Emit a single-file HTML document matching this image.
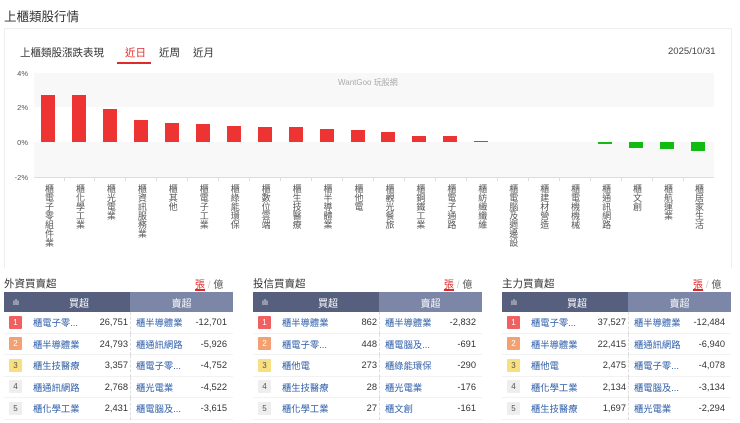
<!DOCTYPE html>
<html><head><meta charset="utf-8"><style>
*{margin:0;padding:0;box-sizing:border-box}
body{width:740px;height:423px;background:#fff;font-family:"Liberation Sans","Noto Sans CJK TC",sans-serif;color:#333;position:relative;overflow:hidden}
.abs{position:absolute}
.title{left:4px;top:6px;font-size:12.5px;color:#333}
.card{left:4px;top:28px;width:728px;height:240px;border:1px solid #eee;border-bottom:none}
.sub{left:20px;top:45px;font-size:10.5px;color:#333}
.tab{top:45px;font-size:10.5px;color:#333}
.date{left:668px;top:46px;font-size:9.5px;color:#444}
.ylab{font-size:7.5px;color:#555;width:26px;text-align:right;left:2px}
.bar{position:absolute;width:14px}
.xl{position:absolute;top:184px;width:10px;font-size:9px;line-height:9.3px;color:#555;writing-mode:vertical-rl;text-orientation:upright}
.ph{font-size:10.5px;top:276px}
.unit{top:276px;font-size:10px}
.tbl{position:absolute;top:292px;width:229px;font-size:9.3px}
.hd{height:20px;display:flex;color:#fff;font-size:10px}
.hd div{display:flex;align-items:center;justify-content:center}
.row{height:21.5px;display:flex;align-items:center;position:relative;border-bottom:1px solid #f2f2f2}
.bd{position:absolute;left:5px;width:13px;height:13px;font-size:8px;text-align:center;line-height:13px;color:#fff;border-radius:1px}
.n1{position:absolute;left:29px;color:#2e5ea8}
.v1{position:absolute;right:105px;color:#333}
.n2{position:absolute;left:132px;color:#2e5ea8}
.v2{position:absolute;right:6px;color:#333}
.dv{position:absolute;left:126px;top:0;bottom:-1px;border-left:1px dashed #ddd}
</style></head><body>
<div class="abs title">上櫃類股行情</div>
<div class="abs card"></div>
<div class="abs sub">上櫃類股漲跌表現</div>
<div class="abs tab" style="left:125px;color:#e02a2a">近日</div>
<div class="abs" style="left:117px;top:62px;width:34px;height:2px;background:#e02a2a"></div>
<div class="abs tab" style="left:159px">近周</div>
<div class="abs tab" style="left:193px">近月</div>
<div class="abs date">2025/10/31</div>
<div class="abs" style="left:34px;top:73px;width:680px;height:34px;background:#f8f8f8"></div>
<div class="abs" style="left:34px;top:142px;width:680px;height:35px;background:#f8f8f8"></div>
<div class="abs" style="left:34px;top:177px;width:680px;border-top:1px solid #ddd"></div>
<div class="abs" style="left:338px;top:77px;font-size:8px;color:#aaa">WantGoo 玩股網</div>
<div class="abs ylab" style="top:69px">4%</div>
<div class="abs ylab" style="top:103px">2%</div>
<div class="abs ylab" style="top:138px">0%</div>
<div class="abs ylab" style="top:173px">-2%</div>
<div id="bars"></div>
<div class="abs ph" style="left:4px">外資買賣超</div>
<div class="abs ph" style="left:253px">投信買賣超</div>
<div class="abs ph" style="left:502px">主力買賣超</div>
<div class="abs unit" style="left:195px;color:#e02a2a">張 <span style="color:#ccc">/</span> <span style="color:#555">億</span></div>
<div class="abs" style="left:195px;top:289px;width:10px;height:2px;background:#e02a2a"></div>
<div class="abs unit" style="left:444px;color:#e02a2a">張 <span style="color:#ccc">/</span> <span style="color:#555">億</span></div>
<div class="abs" style="left:444px;top:289px;width:10px;height:2px;background:#e02a2a"></div>
<div class="abs unit" style="left:693px;color:#e02a2a">張 <span style="color:#ccc">/</span> <span style="color:#555">億</span></div>
<div class="abs" style="left:693px;top:289px;width:10px;height:2px;background:#e02a2a"></div>
<div id="tbls"></div>
<script>
var names=["櫃電子零組件業","櫃化學工業","櫃光電業","櫃資訊服務業","櫃其他","櫃電子工業","櫃綠能環保","櫃數位雲端","櫃生技醫療","櫃半導體業","櫃他電","櫃觀光餐旅","櫃鋼鐵工業","櫃電子通路","櫃紡織纖維","櫃電腦及週邊設","櫃建材營造","櫃電機機械","櫃通訊網路","櫃文創","櫃航運業","櫃居家生活"];
var v=[2.72,2.7,1.9,1.3,1.12,1.05,0.95,0.85,0.85,0.77,0.72,0.6,0.32,0.32,0.06,0,0,0,-0.05,-0.35,-0.4,-0.55];
var h="";
for(var i=0;i<22;i++){var cx=48+i*30.95;var px=v[i]*17.25;
if(v[i]>0)h+='<div class="bar" style="left:'+(cx-7)+'px;top:'+(142-px)+'px;height:'+px+'px;background:#ee3333"></div>';
else if(v[i]<0)h+='<div class="bar" style="left:'+(cx-7)+'px;top:142px;height:'+Math.max(-px,1.5)+'px;background:#11bb11"></div>';
h+='<div class="xl" style="left:'+(cx-5)+'px">'+names[i]+'</div>';
if(i<21)h+='<div class="abs" style="left:'+(cx+15.5)+'px;top:177px;height:4px;border-left:1px solid #ddd"></div>';}
document.getElementById("bars").innerHTML=h;
var T=[[["櫃電子零...","26,751","櫃半導體業","-12,701"],["櫃半導體業","24,793","櫃通訊網路","-5,926"],["櫃生技醫療","3,357","櫃電子零...","-4,752"],["櫃通訊網路","2,768","櫃光電業","-4,522"],["櫃化學工業","2,431","櫃電腦及...","-3,615"]],
[["櫃半導體業","862","櫃半導體業","-2,832"],["櫃電子零...","448","櫃電腦及...","-691"],["櫃他電","273","櫃綠能環保","-290"],["櫃生技醫療","28","櫃光電業","-176"],["櫃化學工業","27","櫃文創","-161"]],
[["櫃電子零...","37,527","櫃半導體業","-12,484"],["櫃半導體業","22,415","櫃通訊網路","-6,940"],["櫃他電","2,475","櫃電子零...","-4,078"],["櫃化學工業","2,134","櫃電腦及...","-3,134"],["櫃生技醫療","1,697","櫃光電業","-2,294"]]];
var bc=["#f06060","#f5a070","#f8e080","#eee","#eee"],tc=["#fff","#fff","#555","#555","#555"];
var o="";
for(var t=0;t<3;t++){o+='<div class="tbl" style="left:'+(4+t*249)+'px"><div class="hd"><div style="width:24px;background:#565f7e;font-size:8px">ılı</div><div style="width:102px;background:#565f7e">買超</div><div style="width:103px;background:#7c86a6">賣超</div></div>';
for(var r=0;r<5;r++){var d=T[t][r];o+='<div class="row"><div class="dv"></div><div class="bd" style="background:'+bc[r]+';color:'+tc[r]+'">'+(r+1)+'</div><span class="n1">'+d[0]+'</span><span class="v1">'+d[1]+'</span><span class="n2">'+d[2]+'</span><span class="v2">'+d[3]+'</span></div>';}
o+='</div>';}
document.getElementById("tbls").innerHTML=o;
</script>
</body></html>
